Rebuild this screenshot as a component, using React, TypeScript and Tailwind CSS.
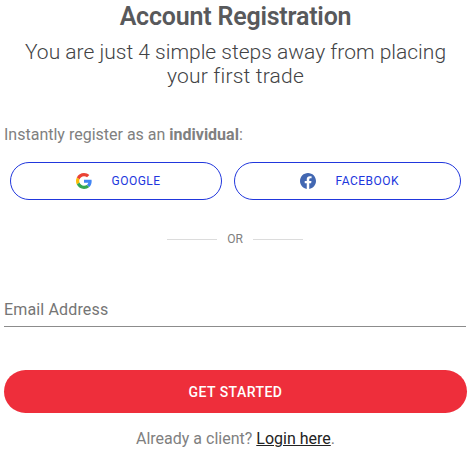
import { useState } from "react";
import type { FormEvent, ReactNode } from "react";

interface SocialButtonProps {
  label: string;
  icon: ReactNode;
  className: string;
}

const GoogleIcon = () => (
  <svg className="h-4 w-4" viewBox="0 0 48 48">
    <path
      fill="#EA4335"
      d="M24 9.5c3.54 0 6.71 1.22 9.21 3.6l6.85-6.85C35.9 2.38 30.47 0 24 0 14.62 0 6.51 5.38 2.56 13.22l7.98 6.19C12.43 13.72 17.74 9.5 24 9.5z"
    />
    <path
      fill="#4285F4"
      d="M46.98 24.55c0-1.57-.15-3.09-.38-4.55H24v9.02h12.94c-.58 2.96-2.26 5.48-4.78 7.18l7.73 6c4.51-4.18 7.09-10.36 7.09-17.65z"
    />
    <path
      fill="#FBBC05"
      d="M10.53 28.59c-.48-1.45-.76-2.99-.76-4.59s.27-3.14.76-4.59l-7.98-6.19C.92 16.46 0 20.12 0 24c0 3.88.92 7.54 2.56 10.78l7.97-6.19z"
    />
    <path
      fill="#34A853"
      d="M24 48c6.48 0 11.93-2.13 15.89-5.81l-7.73-6c-2.15 1.45-4.92 2.3-8.16 2.3-6.26 0-11.57-4.22-13.47-9.91l-7.98 6.19C6.51 42.62 14.62 48 24 48z"
    />
  </svg>
);

const FacebookIcon = () => (
  <svg className="h-4 w-4" viewBox="0 0 24 24">
    <path
      fill="#4267B2"
      d="M24 12.073c0-6.627-5.373-12-12-12s-12 5.373-12 12c0 5.99 4.388 10.954 10.125 11.854v-8.385H7.078v-3.47h3.047V9.43c0-3.007 1.792-4.669 4.533-4.669 1.312 0 2.686.235 2.686.235v2.953H15.83c-1.491 0-1.956.925-1.956 1.874v2.25h3.328l-.532 3.47h-2.796v8.385C19.612 23.027 24 18.062 24 12.073z"
    />
  </svg>
);

const SocialButton = ({ label, icon, className }: SocialButtonProps) => (
  <button
    type="button"
    className={`flex h-[38px] items-center rounded-full border border-[#2137dd] text-xs tracking-[0.5px] text-[#2137dd] ${className}`}
  >
    {icon}
    <span className="ml-[19.5px]">{label}</span>
  </button>
);

const App = () => {
  const [email, setEmail] = useState("");

  const onSubmit = (e: FormEvent) => {
    e.preventDefault();
  };

  return (
    <div className="h-[453px] w-[471px] overflow-hidden bg-white font-['Roboto',sans-serif] text-[#808080]">
      <div className="pt-px text-center">
        <h1 className="text-[25px] leading-8 font-semibold tracking-[-0.2px] text-[#58595b]">
          Account Registration
        </h1>
        <p className="mt-[7px] text-[21px] leading-6 font-light text-[#424345]">
          You are just 4 simple steps away from placing
          <br />
          <span className="tracking-[0.2px]">your first trade</span>
        </p>
      </div>

      <p className="mt-[35px] pl-1 text-base leading-6">
        Instantly register as an <strong className="font-bold">individual</strong>:
      </p>

      <div className="mt-[15px] flex gap-3 pl-[10px]">
        <SocialButton label="GOOGLE" icon={<GoogleIcon />} className="w-[212px] pl-[65px]" />
        <SocialButton label="FACEBOOK" icon={<FacebookIcon />} className="w-[227px] pl-[65px]" />
      </div>

      <div className="mt-[30px] flex items-center pl-[167px] text-xs leading-[18px]">
        <span className="h-px w-[50px] bg-[#dcdcdc]" />
        <span className="w-9 text-center">OR</span>
        <span className="h-px w-[50px] bg-[#dcdcdc]" />
      </div>

      <form onSubmit={onSubmit} className="mt-[43px] pl-1">
        <input
          type="email"
          value={email}
          onChange={(e) => setEmail(e.target.value)}
          placeholder="Email Address"
          className="block h-9 w-[462px] border-b border-[#8c8c8c] pt-0.5 text-base tracking-[0.15px] text-[#333] outline-none placeholder:text-[#757575]"
        />
        <button
          type="submit"
          className="mt-[43px] block h-[43px] w-[463px] rounded-full bg-[#ee2e3b] text-sm font-medium tracking-[0.45px] text-white"
        >
          GET STARTED
        </button>
      </form>

      <p className="mt-3.5 text-center text-base leading-6">
        Already a client?{" "}
        <a href="#" className="text-[#222] underline">
          Login here
        </a>
        .
      </p>
    </div>
  );
};

export default App;
